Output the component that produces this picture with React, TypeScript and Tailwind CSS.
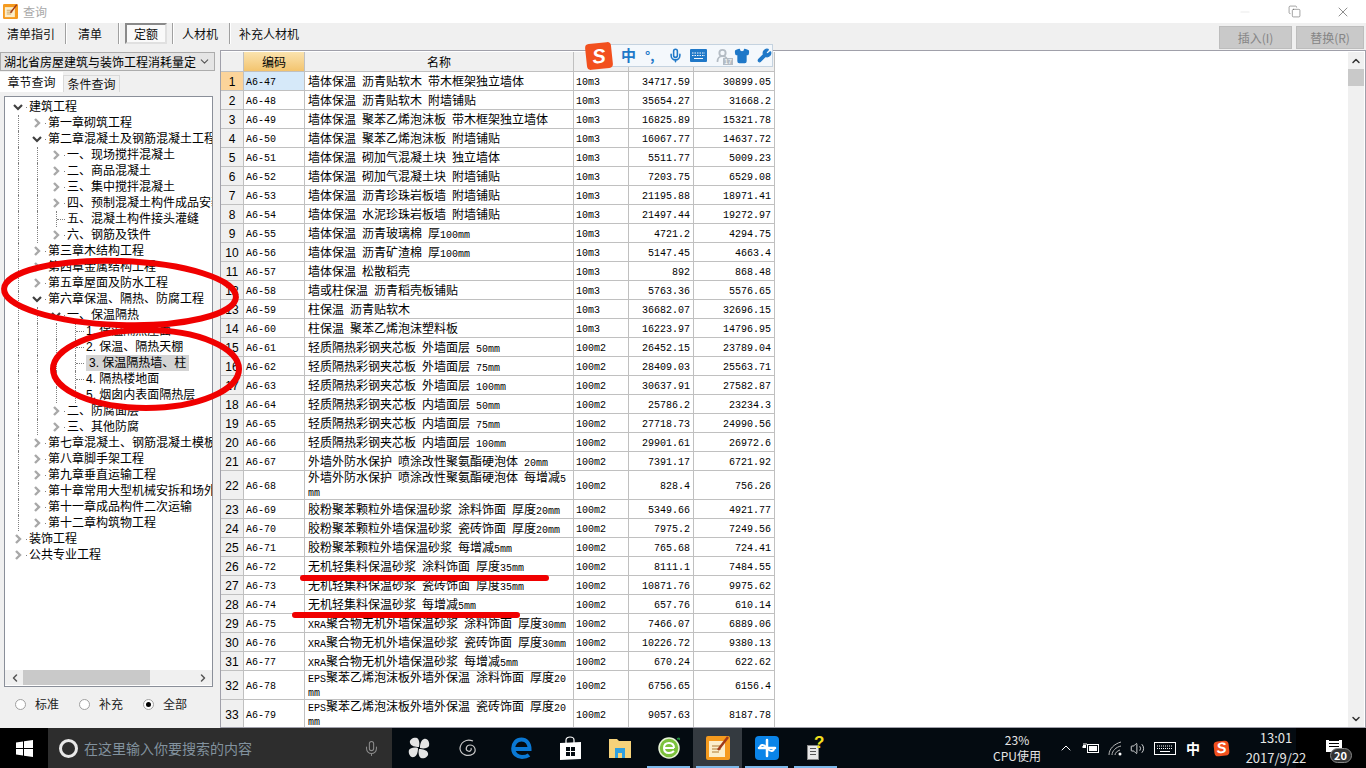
import { ChevronDown, ChevronRight, ChevronLeft, ChevronUp, Copy, X, Minus, Mic, Shirt, Wrench, UserRound, Volume2 } from "lucide-react";

const CJK = '"Noto Sans CJK SC", "Liberation Sans", sans-serif';

type Row = [string, string, string, string, string, number?];

const rows: Row[] = [
  ["A6-47", "墙体保温 沥青贴软木 带木框架独立墙体", "10m3", "34717.59", "30899.05"],
  ["A6-48", "墙体保温 沥青贴软木 附墙铺贴", "10m3", "35654.27", "31668.2"],
  ["A6-49", "墙体保温 聚苯乙烯泡沫板 带木框架独立墙体", "10m3", "16825.89", "15321.78"],
  ["A6-50", "墙体保温 聚苯乙烯泡沫板 附墙铺贴", "10m3", "16067.77", "14637.72"],
  ["A6-51", "墙体保温 砌加气混凝土块 独立墙体", "10m3", "5511.77", "5009.23"],
  ["A6-52", "墙体保温 砌加气混凝土块 附墙铺贴", "10m3", "7203.75", "6529.08"],
  ["A6-53", "墙体保温 沥青珍珠岩板墙 附墙铺贴", "10m3", "21195.88", "18971.41"],
  ["A6-54", "墙体保温 水泥珍珠岩板墙 附墙铺贴", "10m3", "21497.44", "19272.97"],
  ["A6-55", "墙体保温 沥青玻璃棉 厚100mm", "10m3", "4721.2", "4294.75"],
  ["A6-56", "墙体保温 沥青矿渣棉 厚100mm", "10m3", "5147.45", "4663.4"],
  ["A6-57", "墙体保温 松散稻壳", "10m3", "892", "868.48"],
  ["A6-58", "墙或柱保温 沥青稻壳板铺贴", "10m3", "5763.36", "5576.65"],
  ["A6-59", "柱保温 沥青贴软木", "10m3", "36682.07", "32696.15"],
  ["A6-60", "柱保温 聚苯乙烯泡沫塑料板", "10m3", "16223.97", "14796.95"],
  ["A6-61", "轻质隔热彩钢夹芯板 外墙面层 50mm", "100m2", "26452.15", "23789.04"],
  ["A6-62", "轻质隔热彩钢夹芯板 外墙面层 75mm", "100m2", "28409.03", "25563.71"],
  ["A6-63", "轻质隔热彩钢夹芯板 外墙面层 100mm", "100m2", "30637.91", "27582.87"],
  ["A6-64", "轻质隔热彩钢夹芯板 内墙面层 50mm", "100m2", "25786.2", "23234.3"],
  ["A6-65", "轻质隔热彩钢夹芯板 内墙面层 75mm", "100m2", "27718.73", "24990.56"],
  ["A6-66", "轻质隔热彩钢夹芯板 内墙面层 100mm", "100m2", "29901.61", "26972.6"],
  ["A6-67", "外墙外防水保护 喷涂改性聚氨酯硬泡体 20mm", "100m2", "7391.17", "6721.92"],
  ["A6-68", "外墙外防水保护 喷涂改性聚氨酯硬泡体 每增减5mm", "100m2", "828.4", "756.26", 29],
  ["A6-69", "胶粉聚苯颗粒外墙保温砂浆 涂料饰面 厚度20mm", "100m2", "5349.66", "4921.77"],
  ["A6-70", "胶粉聚苯颗粒外墙保温砂浆 瓷砖饰面 厚度20mm", "100m2", "7975.2", "7249.56"],
  ["A6-71", "胶粉聚苯颗粒外墙保温砂浆 每增减5mm", "100m2", "765.68", "724.41"],
  ["A6-72", "无机轻集料保温砂浆 涂料饰面 厚度35mm", "100m2", "8111.1", "7484.55"],
  ["A6-73", "无机轻集料保温砂浆 瓷砖饰面 厚度35mm", "100m2", "10871.76", "9975.62"],
  ["A6-74", "无机轻集料保温砂浆 每增减5mm", "100m2", "657.76", "610.14"],
  ["A6-75", "XRA聚合物无机外墙保温砂浆 涂料饰面 厚度30mm", "100m2", "7466.07", "6889.06"],
  ["A6-76", "XRA聚合物无机外墙保温砂浆 瓷砖饰面 厚度30mm", "100m2", "10226.72", "9380.13"],
  ["A6-77", "XRA聚合物无机外墙保温砂浆 每增减5mm", "100m2", "670.24", "622.62"],
  ["A6-78", "EPS聚苯乙烯泡沫板外墙外保温 涂料饰面 厚度20mm", "100m2", "6756.65", "6156.4", 29],
  ["A6-79", "EPS聚苯乙烯泡沫板外墙外保温 瓷砖饰面 厚度20mm", "100m2", "9057.63", "8187.78", 29],
];

// level, text, open/closed/leaf, vertical guides by column
type Node = { t: string; lv: number; k: "o" | "c" | "l"; g: number[]; sel?: boolean };

const tree: Node[] = [
  { t: "建筑工程", lv: 0, k: "o", g: [] },
  { t: "第一章砌筑工程", lv: 1, k: "c", g: [0] },
  { t: "第二章混凝土及钢筋混凝土工程", lv: 1, k: "o", g: [0] },
  { t: "一、现场搅拌混凝土", lv: 2, k: "c", g: [0, 1] },
  { t: "二、商品混凝土", lv: 2, k: "c", g: [0, 1] },
  { t: "三、集中搅拌混凝土", lv: 2, k: "c", g: [0, 1] },
  { t: "四、预制混凝土构件成品安装", lv: 2, k: "c", g: [0, 1] },
  { t: "五、混凝土构件接头灌缝", lv: 2, k: "l", g: [0, 1, 2] },
  { t: "六、钢筋及铁件", lv: 2, k: "c", g: [0, 1] },
  { t: "第三章木结构工程", lv: 1, k: "c", g: [0] },
  { t: "第四章金属结构工程", lv: 1, k: "c", g: [0] },
  { t: "第五章屋面及防水工程", lv: 1, k: "c", g: [0] },
  { t: "第六章保温、隔热、防腐工程", lv: 1, k: "o", g: [0] },
  { t: "一、保温隔热", lv: 2, k: "o", g: [0, 1] },
  { t: "1. 保温隔热屋面", lv: 3, k: "l", g: [0, 1, 2, 3] },
  { t: "2. 保温、隔热天棚", lv: 3, k: "l", g: [0, 1, 2, 3] },
  { t: "3. 保温隔热墙、柱", lv: 3, k: "l", g: [0, 1, 2, 3], sel: true },
  { t: "4. 隔热楼地面", lv: 3, k: "l", g: [0, 1, 2, 3] },
  { t: "5. 烟囱内表面隔热层", lv: 3, k: "l", g: [0, 1, 2, 3] },
  { t: "二、防腐面层", lv: 2, k: "c", g: [0, 1] },
  { t: "三、其他防腐", lv: 2, k: "c", g: [0, 1] },
  { t: "第七章混凝土、钢筋混凝土模板及支架工程", lv: 1, k: "c", g: [0] },
  { t: "第八章脚手架工程", lv: 1, k: "c", g: [0] },
  { t: "第九章垂直运输工程", lv: 1, k: "c", g: [0] },
  { t: "第十章常用大型机械安拆和场外运输费用", lv: 1, k: "c", g: [0] },
  { t: "第十一章成品构件二次运输", lv: 1, k: "c", g: [0] },
  { t: "第十二章构筑物工程", lv: 1, k: "c", g: [0] },
  { t: "装饰工程", lv: 0, k: "c", g: [] },
  { t: "公共专业工程", lv: 0, k: "c", g: [] },
];

// latin runs are 6px wide per char in the original bitmap font
function Mixed({ text }: { text: string }) {
  const parts = text.match(/[\x00-\x7f]+|[^\x00-\x7f]+/g) ?? [];
  return (
    <>
      {parts.map((p, i) =>
        /^[\x00-\x7f]/.test(p) ? (
          <span key={i} className="font-['Liberation_Mono'] text-[10px] leading-[10px] whitespace-pre-wrap text-black">
            {p}
          </span>
        ) : (
          <span key={i}>{p}</span>
        )
      )}
    </>
  );
}

function TreeRow({ n }: { n: Node }) {
  return (
    <div className="flex h-4 items-stretch whitespace-nowrap">
      {Array.from({ length: n.lv }).map((_, i) => (
        <div key={i} className="w-[19px] shrink-0">
          {n.g.includes(i) && <div className="ml-[9px] h-full border-l border-dotted border-[#808080]" />}
        </div>
      ))}
      <div className="relative flex w-[19px] shrink-0 items-center justify-center">
        {n.k === "o" && (
          <svg width="19" height="16" viewBox="0 0 19 16" fill="none">
            <path d="M5 6 9 10 13 6" stroke="#404040" strokeWidth="2.2" />
            <rect x="17" y="8" width="1" height="1" fill="#808080" />
          </svg>
        )}
        {n.k === "c" && (
          <svg width="19" height="16" viewBox="0 0 19 16" fill="none">
            <path d="M7 4 11 8 7 12" stroke="#a8a8a8" strokeWidth="2.4" />
            <rect x="17" y="8" width="1" height="1" fill="#808080" />
          </svg>
        )}
        {n.k === "l" && (
          <div className="ml-[9px] h-full w-full border-l border-dotted border-[#808080]">
            <div className="mt-[8px] w-[8px] border-t border-dotted border-[#808080]" />
          </div>
        )}
      </div>
      <span className={`ml-px flex items-center pr-[3px] font-['Liberation_Sans','Noto_Sans_CJK_SC',sans-serif] text-black ${n.sel ? "-ml-[2px] bg-[#d4d4d4] pl-[3px]" : ""}`}>
        {n.t}
      </span>
    </div>
  );
}

function Radio({ label, on }: { label: string; on?: boolean }) {
  return (
    <div className="flex items-center gap-[9px]">
      <span className="flex h-[11px] w-[11px] items-center justify-center rounded-full border border-[#a0a0a0] bg-white">
        {on && <span className="h-[5px] w-[5px] rounded-full bg-black" />}
      </span>
      <span className="text-[12px] text-[#222]">{label}</span>
    </div>
  );
}

function ToolSep() {
  return <div className="h-[21px] w-[2px] border-x border-x-[#a0a0a0] border-r-white" />;
}

function Toolbar() {
  return (
    <div className="flex h-[27px] items-start justify-between bg-[#f0f0f0]">
      <div className="flex h-[21px] items-center text-[12px] text-[#111]">
        <span className="ml-[7px] w-[48px]">清单指引</span>
        <div className="ml-[10px]"><ToolSep /></div>
        <span className="ml-[11px] w-[36px]">清单</span>
        <div className="ml-[4px]"><ToolSep /></div>
        <span className="ml-[5px] flex h-[21px] w-[42px] items-center justify-center border-2 border-[#8a8a8a] border-r-[#e0e0e0] border-b-[#e0e0e0] bg-[#fafafa]">定额</span>
        <div className="ml-[5px]"><ToolSep /></div>
        <span className="ml-[8px] w-[36px]">人材机</span>
        <div className="ml-[11px]"><ToolSep /></div>
        <span className="ml-[8px]">补充人材机</span>
      </div>
      <div className="mt-[3px] mr-[2px] flex gap-[4px] text-[12px] text-[#858585]">
        <div className="flex h-[23px] w-[73px] items-center justify-center border border-[#bdbdbd] bg-[#c9c9c9]">插入(I)</div>
        <div className="flex h-[23px] w-[68px] items-center justify-center border border-[#bdbdbd] bg-[#c9c9c9]">替换(R)</div>
      </div>
    </div>
  );
}

function LeftPanel() {
  return (
    <div className="flex h-full w-[220px] shrink-0 flex-col bg-[#f0f0f0] pt-[2px]">
      <div className="flex h-[19px] w-[215px] items-center justify-between overflow-hidden border border-[#acacac] bg-[#e5e5e5] pr-[3px] pl-[3px] text-[12px] text-black">
        <span className="w-[192px] overflow-hidden whitespace-nowrap">湖北省房屋建筑与装饰工程消耗量定额</span>
        <ChevronDown size={13} className="shrink-0 text-[#555]" />
      </div>
      <div className="mt-[2px] flex h-[19px] items-end text-[12px] text-[#111]">
        <div className="flex h-[20px] w-[63px] items-center justify-center bg-white">章节查询</div>
        <div className="flex h-[17px] w-[57px] items-center justify-center border border-b-0 border-[#d9d9d9] bg-[#f0f0f0]">条件查询</div>
      </div>
      <div className="mt-[4px] ml-[4px] flex h-[591px] w-[209px] flex-col overflow-hidden border border-[#8a8f99] bg-white">
        <div className="flex-1 overflow-hidden pt-[2px] pl-[4px] text-[12px]">
          {tree.map((n, i) => (
            <TreeRow key={i} n={n} />
          ))}
        </div>
        <div className="mb-px flex h-[15px] items-center justify-between bg-[#f0f0f0] text-[#555]">
          <div className="relative flex h-full w-full items-center">
            <ChevronLeft size={12} strokeWidth={3} className="ml-[4px] shrink-0" />
            <div className="ml-[2px] h-full w-[127px] bg-[#c9c9c9]" />
            <div className="flex-1" />
            <ChevronRight size={12} strokeWidth={3} className="mr-[3px] shrink-0" />
          </div>
        </div>
      </div>
      <div className="mt-[8px] flex items-center gap-[20px] pl-[15px]">
        <Radio label="标准" />
        <Radio label="补充" />
        <Radio label="全部" on />
      </div>
    </div>
  );
}

function PriceTable() {
  const cell = "border-r border-b border-[#c0c0c0]";
  const body = `${cell} pt-[2px]`;
  return (
    <table className="w-[554px] table-fixed border-separate border-spacing-0 text-[12px] leading-[13px] text-black">
      <colgroup>
        <col className="w-[23px]" />
        <col className="w-[61px]" />
        <col className="w-[269px]" />
        <col className="w-[55px]" />
        <col className="w-[65px]" />
        <col className="w-[81px]" />
      </colgroup>
      <thead>
        <tr className="h-[20px] text-center">
          <th className={`${cell} bg-[#f0f0f0]`} />
          <th className={`${cell} bg-gradient-to-b from-[#fae3ae] to-[#f3c46e] font-normal`}>编码</th>
          <th className={`${cell} bg-[#f0f0f0] font-normal`}>名称</th>
          <th className={`${cell} bg-[#f0f0f0] font-normal`}>单位</th>
          <th className={`${cell} bg-[#f0f0f0]`} />
          <th className={`${cell} bg-[#f0f0f0]`} />
        </tr>
      </thead>
      <tbody>
        {rows.map((r, i) => (
          <tr key={r[0]} style={{ height: r[5] ?? 19 }}>
            <td className={`${body} text-center font-['Liberation_Sans'] text-[12px] ${i === 0 ? "bg-[#fcd49a]" : "bg-[#f0f0f0]"}`}>{i + 1}</td>
            <td className={`${body} pl-[2px] font-['Liberation_Mono'] text-[10px] ${i === 0 ? "bg-[#d6e9f9]" : ""}`}>{r[0]}</td>
            <td className={`${cell} pr-[4px] pl-[3px] break-all ${r[5] ? "overflow-hidden leading-[11px]" : "pt-[2px] leading-[12px]"}`}>
              <Mixed text={r[1]} />
            </td>
            <td className={`${body} pl-[2px] font-['Liberation_Mono'] text-[10px]`}>{r[2]}</td>
            <td className={`${body} pr-[3px] text-right font-['Liberation_Mono'] text-[10px]`}>{r[3]}</td>
            <td className={`${body} pr-[3px] text-right font-['Liberation_Mono'] text-[10px]`}>{r[4]}</td>
          </tr>
        ))}
      </tbody>
    </table>
  );
}

function KeyboardIcon({ w, h, color }: { w: number; h: number; color: string }) {
  return (
    <svg width={w} height={h} viewBox="0 0 22 13" fill="none" stroke={color}>
      <rect x="0.5" y="0.5" width="21" height="12" strokeWidth="1" />
      <path d="M3 4H19M3 6.500H19" strokeWidth="1" strokeDasharray="1 1" />
      <path d="M6 9.500H16" strokeWidth="1" />
    </svg>
  );
}

function NotesIcon({ size }: { size: number }) {
  return (
    <svg width={size} height={size} viewBox="0 0 24 24" className="shrink-0">
      <rect width="24" height="24" rx="2" fill="#f59a1e" />
      <rect x="3" y="5" width="16" height="16" fill="#fbeecb" />
      <path d="M6 10H15M6 13H15M6 16H13" stroke="#b07a30" strokeWidth="1" />
      <path d="M22 1 12 14" stroke="#a03a1a" strokeWidth="2.500" />
    </svg>
  );
}

function ImeBar() {
  return (
    <div className="absolute top-[44px] left-[588px] flex h-[23px] w-[185px] items-center border border-[#c5d3e0] bg-[#f4f8fc] pl-[32px] text-[#1f78c8]">
      <span className="text-[15px] font-bold">中</span>
      <span className="ml-[9px] w-[14px] text-[13px] font-bold">°,</span>
      <Mic size={15} strokeWidth={2.5} className="ml-[9px]" />
      <svg width="17" height="13" viewBox="0 0 17 13" className="ml-[7px]">
        <rect width="17" height="13" rx="1" fill="#1f78c8" />
        <path d="M2 4H15M2 6.500H15" stroke="#f4f8fc" strokeDasharray="1.500 1" />
        <path d="M4 9.500H13" stroke="#f4f8fc" />
      </svg>
      <div className="relative ml-[8px]">
        <UserRound size={15} strokeWidth={3} className="text-[#b4bcc4]" />
        <span className="absolute -right-[3px] -bottom-[2px] bg-[#b4bcc4] px-px font-['Liberation_Sans'] text-[7px] leading-[7px] text-white">17</span>
      </div>
      <Shirt size={16} fill="#1f78c8" className="ml-[4px]" />
      <Wrench size={15} fill="#1f78c8" className="ml-[7px]" />
    </div>
  );
}

function SogouLogo({ size, big }: { size: number; big?: boolean }) {
  return (
    <span
      className={`flex shrink-0 -rotate-6 items-center justify-center rounded-[4px] bg-[#f2501e] font-['Liberation_Sans'] font-bold text-white italic ${big ? "text-[20px]" : "text-[15px]"}`}
      style={{ width: size, height: size }}
    >
      S
    </span>
  );
}

function TaskIcon({ children, w = 49, ml = 0, active, line }: { children: React.ReactNode; w?: number; ml?: number; active?: boolean; line?: boolean }) {
  return (
    <div className={`relative flex h-full items-center justify-center ${active ? "bg-[#343a40]" : ""}`} style={{ width: w, marginLeft: ml }}>
      {children}
      {line && <div className="absolute right-[3px] bottom-0 left-[3px] h-[2px] bg-[#7db8ea]" />}
    </div>
  );
}

function Taskbar() {
  return (
    <div className="flex h-[40px] shrink-0 items-center bg-[#040b11] text-white">
      <div className="flex h-full w-[48px] items-center justify-center bg-black">
        <svg width="17" height="17" viewBox="0 0 17 17" fill="#fff">
          <path d="M0 2.5 7 1.5V8H0ZM8 1.3 17 0V8H8ZM0 9H7V15.5L0 14.5ZM8 9H17V17L8 15.7Z" />
        </svg>
      </div>
      <div className="flex h-full w-[344px] items-center bg-[#2d2d2d] pl-[11px]">
        <div className="h-[19px] w-[19px] rounded-full border-[3px] border-[#e8e8e8]" />
        <span className="ml-[6px] text-[14px] text-[#82929e]">在这里输入你要搜索的内容</span>
        <Mic size={17} strokeWidth={1.5} className="ml-[111px] text-[#8a8a8a]" />
      </div>
      <div className="ml-[2px] flex h-full items-center">
        <TaskIcon>
          <svg width="22" height="22" viewBox="0 0 22 22" fill="#e4e4e4">
            <path d="M11 10C7 10 3 9 2 6 1 2 6 0 9 1 11 2 12 6 11 10ZM12 11C12 7 13 3 16 2 20 1 22 6 21 9 20 11 16 12 12 11ZM11 12C15 12 19 13 20 16 21 20 16 22 13 21 11 20 10 16 11 12ZM10 11C10 15 9 19 6 20 2 21 0 16 1 13 2 11 6 10 10 11Z" />
          </svg>
        </TaskIcon>
        <TaskIcon>
          <svg width="20" height="20" viewBox="0 0 20 20" fill="none" stroke="#c8c8c8" strokeWidth="1.2">
            <path d="M15 3C8 0 2 5 2 11 3 17 10 19 15 16 19 13 17 7 12 7 8 7 7 12 10 13 12 14 14 12 13 10" />
          </svg>
        </TaskIcon>
        <TaskIcon ml={5}>
          <svg width="21" height="22" viewBox="0 0 21 22" fill="none" stroke="#0a78d4" strokeWidth="4">
            <path d="M3 12H18.5C18.5 6 15 2.5 10.5 2.5 5.5 2.5 2.2 6.5 2.2 11.5 2.2 17 6.5 20 11 20 14 20 16.500 19.200 18 18" />
          </svg>
        </TaskIcon>
        <TaskIcon>
          <svg width="21" height="24" viewBox="0 0 21 24" fill="#fff">
            <path d="M0 7 21 6V23L0 24Z" />
            <path d="M6 7V4C6 0 14 0 14 4V7" fill="none" stroke="#fff" strokeWidth="1.2" />
            <path d="M6 11H10V15H6ZM11 11H15V15H11ZM6 16H10V20H6ZM11 16H15V20H11Z" fill="#040b11" />
          </svg>
        </TaskIcon>
        <TaskIcon>
          <svg width="22" height="20" viewBox="0 0 22 20">
            <path d="M0 1H8L10 3H22V20H0Z" fill="#f6d27a" />
            <path d="M6 10H16V20H13V15H9V20H6Z" fill="#2f9fe0" />
          </svg>
        </TaskIcon>
        <TaskIcon line>
          <svg width="24" height="24" viewBox="0 0 24 24">
            <circle cx="12" cy="12" r="10" fill="#7cc23c" stroke="#e8f4d8" strokeWidth="1.5" />
            <path d="M7 12H17M17 12C17 8 14 7 12 7 9 7 7 9 7 12 7 15 9 17 12 17 14 17 15.500 16.500 17 15" fill="none" stroke="#fff" strokeWidth="2" />
            <path d="M20 3C22 2 23 2 22 4" fill="none" stroke="#1f8a3c" strokeWidth="1.5" />
          </svg>
        </TaskIcon>
        <TaskIcon active line>
          <NotesIcon size={24} />
        </TaskIcon>
        <TaskIcon line>
          <svg width="24" height="24" viewBox="0 0 24 24">
            <rect width="24" height="24" rx="4" fill="#0a84e8" />
            <path d="M12 4V20M4 12H20" stroke="#fff" strokeWidth="2.500" strokeLinecap="round" />
            <path d="M12 12C8 7 5 9 5 12M12 12C16 17 19 15 19 12" fill="none" stroke="#fff" strokeWidth="2" />
          </svg>
        </TaskIcon>
        <TaskIcon line>
          <div className="relative h-[24px] w-[18px]">
            <div className="absolute bottom-0 left-0 flex h-[15px] w-[12px] flex-col gap-[2px] border border-[#888] bg-[#e8e8e8] p-[2px]">
              <div className="h-px bg-[#555]" />
              <div className="h-px bg-[#555]" />
              <div className="h-px bg-[#555]" />
            </div>
            <span className="absolute -top-[3px] right-0 font-['Liberation_Sans'] text-[17px] leading-[20px] font-bold text-[#f5e11e]">?</span>
          </div>
        </TaskIcon>
      </div>
      <div className="flex-1" />
      <div className="flex h-full items-center">
        <div className="w-[60px] text-center text-[12px] leading-[16px] text-[#e6e6e6]">
          <div>23%</div>
          <div>CPU使用</div>
        </div>
        <ChevronUp size={16} strokeWidth={1.5} className="ml-[11px]" />
        <svg width="18" height="12" viewBox="0 0 18 12" fill="none" className="ml-[8px]">
          <rect x="5.500" y="2.500" width="11" height="8" stroke="#fff" />
          <rect x="7" y="4" width="8" height="5" fill="#fff" />
          <path d="M0 5H4M2 3V1M4 3V1" stroke="#fff" />
          <rect x="1" y="3" width="3" height="3" fill="#fff" />
        </svg>
        <svg width="15" height="15" viewBox="0 0 15 15" fill="none" stroke="#b8b8b8" className="ml-[8px]">
          <path d="M1 14C1 8 6 3 13 1M4 14C4 10 8 6 13 5M7 14C7 12 9 10 12 9" />
          <circle cx="12" cy="13" r="1.500" fill="#fff" stroke="none" />
        </svg>
        <Volume2 size={15} strokeWidth={1.3} className="ml-[7px]" />
        <div className="ml-[9px]"><KeyboardIcon w={22} h={13} color="#fff" /></div>
        <span className="ml-[10px] text-[14px] font-bold">中</span>
        <div className="ml-[14px]"><SogouLogo size={15} /></div>
        <div className="ml-[14px] flex h-full w-[66px] flex-col justify-center bg-[linear-gradient(90deg,#040b11_81%,#000_81%)] text-center text-[13px] leading-[20px] text-[#e6e6e6]">
          <div>13:01</div>
          <div>2017/9/22</div>
        </div>
        <div className="flex h-full w-[57px] items-center justify-center bg-black">
          <div className="relative h-[24px] w-[24px]">
            <div className="mt-[4px] h-[12px] w-[16px] bg-white">
              <div className="mx-[3px] border-t border-black pt-[2px]" />
              <div className="mx-[3px] border-t border-black pt-[2px]" />
              <div className="mx-[3px] border-t border-black" />
            </div>
            <span className="absolute top-[12px] left-[4px] flex h-[15px] w-[22px] items-center justify-center rounded-full border border-[#888] bg-[#333] text-[11px] font-bold">20</span>
          </div>
        </div>
      </div>
    </div>
  );
}

export default function App() {
  return (
    <div className="relative flex h-screen w-full flex-col overflow-hidden bg-[#f0f0f0] text-[12px] antialiased" style={{ fontFamily: CJK }}>
      <div className="flex h-[23px] shrink-0 items-center justify-between bg-white">
        <div className="flex items-center">
          <div className="ml-[3px]"><NotesIcon size={15} /></div>
          <span className="ml-[5px] text-[12px] text-[#a8a8a8]">查询</span>
        </div>
        <div className="flex items-center text-[#555]">
          <Minus size={14} strokeWidth={1} className="mr-[36px] text-[#ddd]" />
          <Copy size={13} strokeWidth={1} className="mr-[34px]" />
          <X size={16} strokeWidth={1} className="mr-[15px]" />
        </div>
      </div>
      <Toolbar />
      <div className="flex h-[678px] shrink-0">
        <LeftPanel />
        <div className="flex h-full flex-1 overflow-hidden border border-[#a0a0aa] bg-white pt-px">
          <div className="h-full flex-1 overflow-hidden">
            <PriceTable />
          </div>
          <div className="mr-px flex h-full w-[16px] flex-col bg-[#f0f0f0]">
            <div className="flex h-[17px] items-center justify-center text-[#333]">
              <ChevronUp size={12} strokeWidth={3} />
            </div>
            <div className="h-[17px] bg-[#c9c9c9]" />
            <div className="flex-1" />
            <div className="flex h-[17px] items-center justify-center text-[#333]">
              <ChevronDown size={12} strokeWidth={3} />
            </div>
          </div>
        </div>
      </div>
      <Taskbar />

      <ImeBar />
      <div className="absolute top-[43px] left-[586px]">
        <SogouLogo size={26} big />
      </div>

      {/* hand-drawn red marks over the screenshot */}
      <svg className="pointer-events-none absolute inset-0" width="1366" height="768" fill="none" stroke="#f00000">
        <ellipse cx="120" cy="293" rx="116" ry="32" strokeWidth="6" transform="rotate(2 120 293)" />
        <ellipse cx="146" cy="369" rx="93" ry="39" strokeWidth="6" />
        <path d="M303 578H546M295 615H517" strokeWidth="6" strokeLinecap="round" />
      </svg>
    </div>
  );
}
